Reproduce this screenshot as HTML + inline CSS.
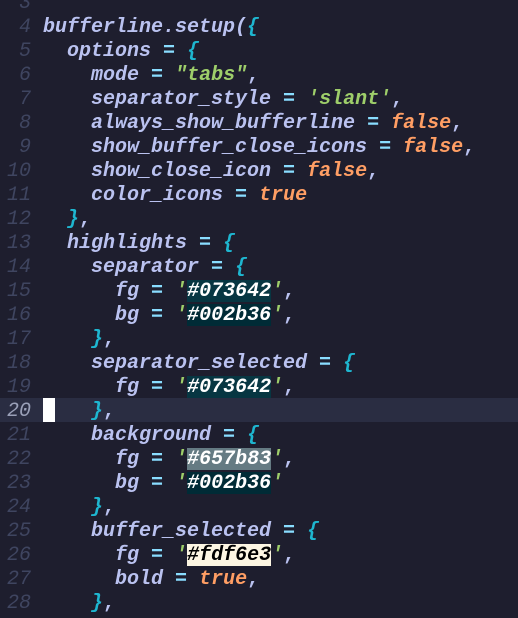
<!DOCTYPE html>
<html style="width:518px;height:618px;overflow:hidden"><head><style>
html,body{margin:0;padding:0;}
body{width:518px;height:618px;background:#1e1e2e;overflow:hidden;position:relative;font-family:"Liberation Mono",monospace;font-size:20px;font-weight:bold;font-style:italic;}
.l{position:absolute;left:0;width:518px;height:24px;line-height:28px;white-space:pre;overflow:hidden;}
.n{position:absolute;left:0;width:31px;text-align:right;color:#3f4560;font-weight:normal;}
.c{position:absolute;left:43px;color:#bac2f0;}
.cur{background:#2a2d42;}
.cur .n{color:#9aa0b8;}
.e{color:#89ddff;font-style:normal}
.b{color:#1eb6d0;}
.s{color:#9ece6a;}
.o{color:#ff9e64;}
.p{color:#bac2f0;font-style:normal}
.h1{background:#073642;color:#fff}
.h2{background:#002b36;color:#fff}
.h3{background:#657b83;color:#fff}
.h4{background:#fdf6e3;color:#000}
.blk{position:absolute;left:43px;top:0;width:12px;height:24px;background:#fff;}
</style></head><body>
<div class="l" style="top:-10px"><span class="n">3</span></div>
<div class="l" style="top:14px"><span class="n">4</span><span class="c">bufferline.setup(<span class="b">{</span></span></div>
<div class="l" style="top:38px"><span class="n">5</span><span class="c">  options <span class="e">=</span> <span class="b">{</span></span></div>
<div class="l" style="top:62px"><span class="n">6</span><span class="c">    mode <span class="e">=</span> <span class="s">"tabs"</span><span class="p">,</span></span></div>
<div class="l" style="top:86px"><span class="n">7</span><span class="c">    separator_style <span class="e">=</span> <span class="s">'slant'</span><span class="p">,</span></span></div>
<div class="l" style="top:110px"><span class="n">8</span><span class="c">    always_show_bufferline <span class="e">=</span> <span class="o">false</span><span class="p">,</span></span></div>
<div class="l" style="top:134px"><span class="n">9</span><span class="c">    show_buffer_close_icons <span class="e">=</span> <span class="o">false</span><span class="p">,</span></span></div>
<div class="l" style="top:158px"><span class="n">10</span><span class="c">    show_close_icon <span class="e">=</span> <span class="o">false</span><span class="p">,</span></span></div>
<div class="l" style="top:182px"><span class="n">11</span><span class="c">    color_icons <span class="e">=</span> <span class="o">true</span></span></div>
<div class="l" style="top:206px"><span class="n">12</span><span class="c">  <span class="b">}</span><span class="p">,</span></span></div>
<div class="l" style="top:230px"><span class="n">13</span><span class="c">  highlights <span class="e">=</span> <span class="b">{</span></span></div>
<div class="l" style="top:254px"><span class="n">14</span><span class="c">    separator <span class="e">=</span> <span class="b">{</span></span></div>
<div class="l" style="top:278px"><span class="n">15</span><span class="c">      fg <span class="e">=</span> <span class="s">'</span><span class="h1">#073642</span><span class="s">'</span><span class="p">,</span></span></div>
<div class="l" style="top:302px"><span class="n">16</span><span class="c">      bg <span class="e">=</span> <span class="s">'</span><span class="h2">#002b36</span><span class="s">'</span><span class="p">,</span></span></div>
<div class="l" style="top:326px"><span class="n">17</span><span class="c">    <span class="b">}</span><span class="p">,</span></span></div>
<div class="l" style="top:350px"><span class="n">18</span><span class="c">    separator_selected <span class="e">=</span> <span class="b">{</span></span></div>
<div class="l" style="top:374px"><span class="n">19</span><span class="c">      fg <span class="e">=</span> <span class="s">'</span><span class="h1">#073642</span><span class="s">'</span><span class="p">,</span></span></div>
<div class="l cur" style="top:398px"><span class="n">20</span><span class="c">    <span class="b">}</span><span class="p">,</span></span><span class="blk"></span></div>
<div class="l" style="top:422px"><span class="n">21</span><span class="c">    background <span class="e">=</span> <span class="b">{</span></span></div>
<div class="l" style="top:446px"><span class="n">22</span><span class="c">      fg <span class="e">=</span> <span class="s">'</span><span class="h3">#657b83</span><span class="s">'</span><span class="p">,</span></span></div>
<div class="l" style="top:470px"><span class="n">23</span><span class="c">      bg <span class="e">=</span> <span class="s">'</span><span class="h2">#002b36</span><span class="s">'</span></span></div>
<div class="l" style="top:494px"><span class="n">24</span><span class="c">    <span class="b">}</span><span class="p">,</span></span></div>
<div class="l" style="top:518px"><span class="n">25</span><span class="c">    buffer_selected <span class="e">=</span> <span class="b">{</span></span></div>
<div class="l" style="top:542px"><span class="n">26</span><span class="c">      fg <span class="e">=</span> <span class="s">'</span><span class="h4">#fdf6e3</span><span class="s">'</span><span class="p">,</span></span></div>
<div class="l" style="top:566px"><span class="n">27</span><span class="c">      bold <span class="e">=</span> <span class="o">true</span><span class="p">,</span></span></div>
<div class="l" style="top:590px"><span class="n">28</span><span class="c">    <span class="b">}</span><span class="p">,</span></span></div>
</body></html>
